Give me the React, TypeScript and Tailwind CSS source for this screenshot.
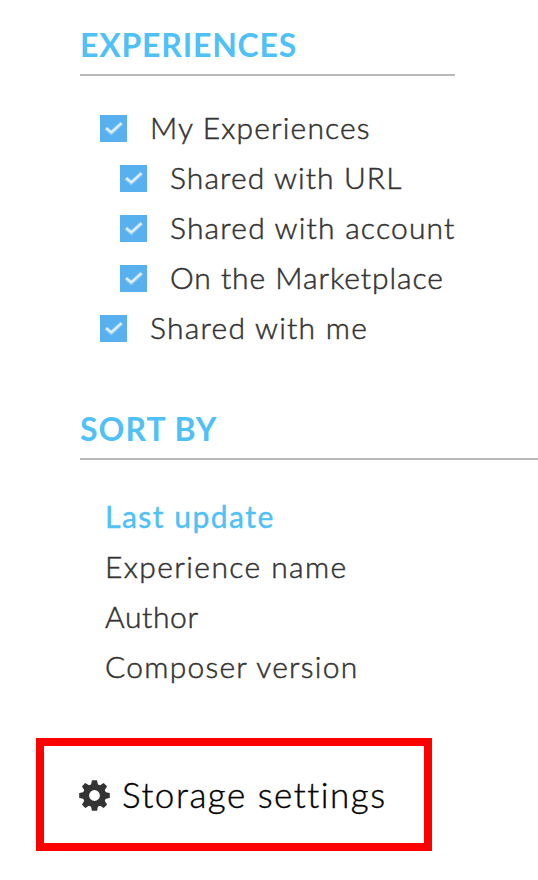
import { clsx } from "clsx";

interface FilterItem {
  label: string;
  nested?: boolean;
  className: string;
}

const filters: FilterItem[] = [
  { label: "My Experiences", className: "tracking-[1.15px]" },
  { label: "Shared with URL", nested: true, className: "tracking-[1.1px]" },
  { label: "Shared with account", nested: true, className: "tracking-[1.2px]" },
  { label: "On the Marketplace", nested: true, className: "tracking-[0.95px]" },
  { label: "Shared with me", className: "tracking-[1.25px]" },
];

const sortOptions = [
  { label: "Last update", className: "tracking-[1.5px]" },
  { label: "Experience name", className: "tracking-[1.4px]" },
  { label: "Author", className: "tracking-[0.65px]" },
  { label: "Composer version", className: "tracking-[1.25px]" },
];

const teeth = [0, 45, 90, 135, 180, 225, 270, 315];

function CheckedBox() {
  return (
    <span className="flex h-[27px] w-[27px] shrink-0 bg-[#58b0ef]">
      <svg viewBox="0 0 27 27" className="h-full w-full" fill="none">
        <path d="M5.8 13.1L11.3 17.8L21.8 8" stroke="#8cc8f4" strokeWidth="4.2" />
        <path d="M6.2 13.2L11.3 17.3L21.5 8.2" stroke="#e0f1fc" strokeWidth="2.2" />
      </svg>
    </span>
  );
}

function CogIcon() {
  return (
    <svg viewBox="0 0 31 31" className="mt-px h-[31px] w-[31px] shrink-0" fill="#333333">
      <circle cx="15.5" cy="15.5" r="8.5" fill="none" stroke="#333333" strokeWidth="6.2" />
      {teeth.map((angle) => (
        <path
          key={angle}
          d="M11.8 6L12.9 0.6Q13 0.2 13.5 0.2H17.5Q18 0.2 18.1 0.6L19.2 6Z"
          transform={`rotate(${angle} 15.5 15.5)`}
        />
      ))}
    </svg>
  );
}

export default function App() {
  return (
    <div className="h-[880px] w-[538px] overflow-hidden bg-white font-['Lato',sans-serif] text-[30px] leading-[50px] whitespace-nowrap text-[#333333]">
      {/* Experiences */}
      <section className="pt-5 pl-20">
        <h2 className="h-14 w-[375px] border-b-2 border-[#b9b9b9] text-[32px] font-bold text-[#4fc1f6]">
          <span className="tracking-[0.8px]">EXPERIENCES</span>
        </h2>
        <ul className="mt-[27px] pl-5">
          {filters.map((item) => (
            <li
              key={item.label}
              className={clsx("flex h-[50px] items-center gap-[23px]", item.nested && "pl-5")}
            >
              <CheckedBox />
              <span className={clsx("pb-0.5 font-light [-webkit-text-stroke:0.5px]", item.className)}>
                {item.label}
              </span>
            </li>
          ))}
        </ul>
      </section>

      {/* Sort by */}
      <section className="mt-[51px] pl-20">
        <h2 className="h-14 border-b-2 border-[#b9b9b9] text-[32px] font-bold text-[#4fc1f6]">
          <span className="tracking-[1px]">SORT BY</span>
        </h2>
        <ul className="mt-[31px] pl-[25px]">
          {sortOptions.map((option, idx) => (
            <li
              key={option.label}
              className={clsx(
                "h-[50px]",
                idx === 0
                  ? "text-[#4fc1f6] [-webkit-text-stroke:0.4px]"
                  : "font-light [-webkit-text-stroke:0.5px]"
              )}
            >
              <span className={option.className}>{option.label}</span>
            </li>
          ))}
        </ul>
      </section>

      {/* Storage settings */}
      <div className="mt-[47px] ml-9 flex h-[113px] w-[396px] items-center gap-3 border-8 border-[#ff0000] pl-[35px] text-[35px] text-black">
        <CogIcon />
        <span className="pb-px font-light tracking-[1.5px] [-webkit-text-stroke:0.4px]">
          Storage settings
        </span>
      </div>
    </div>
  );
}
